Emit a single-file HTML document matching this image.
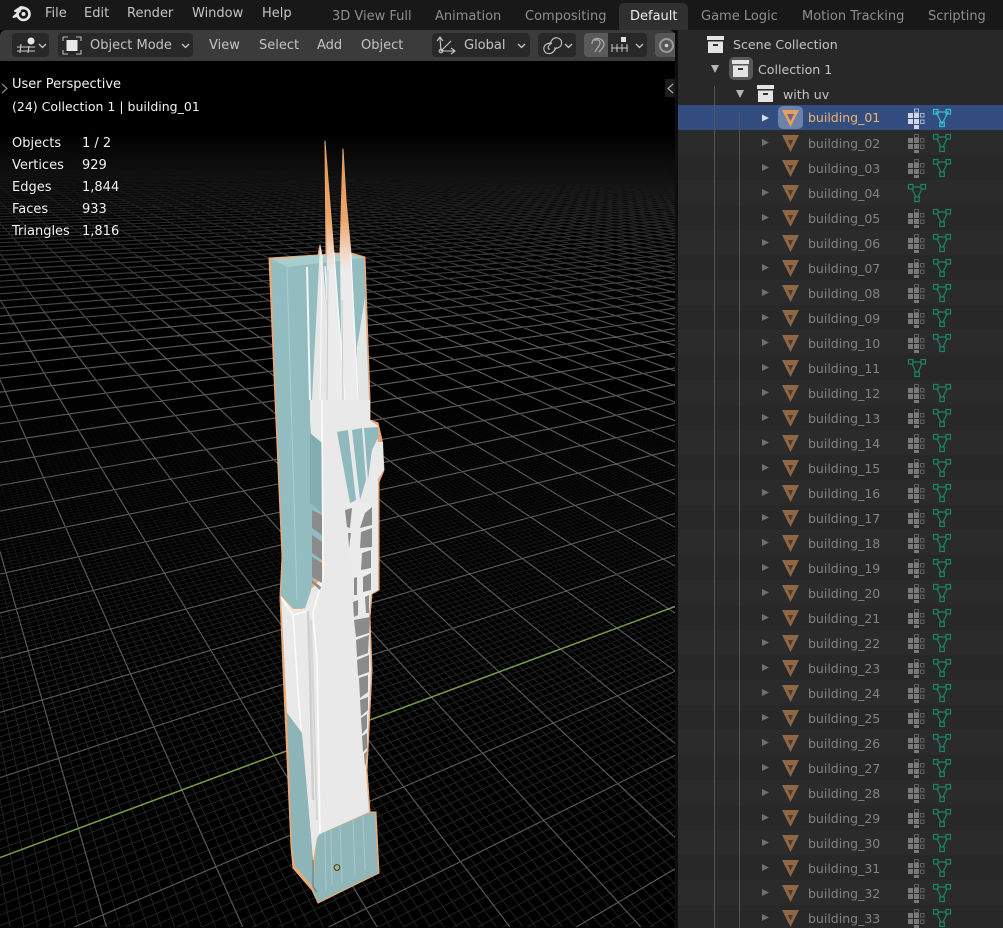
<!DOCTYPE html>
<html><head><meta charset="utf-8">
<style>
html,body{margin:0;padding:0;background:#000;overflow:hidden;width:1003px;height:928px}
#p{position:relative;width:1003px;height:928px;overflow:hidden;background:#000;font-family:"DejaVu Sans","Liberation Sans",sans-serif;font-size:13px;color:#c4c4c4}
.a{position:absolute;white-space:nowrap}
.t{position:absolute;white-space:nowrap;line-height:16px}
.w{color:#8e8e8e}
.o{position:absolute;color:#f2f2f2;white-space:nowrap;line-height:16px;text-shadow:0 0 2px #000}
.btn{position:absolute;background:#282828;border-radius:4px;top:33px;height:24px}
#out{position:absolute;left:678px;top:30px;width:325px;height:898px;background:#282828;overflow:hidden;font-size:12.6px}
#rows{position:absolute;left:0;top:75px;width:325px;height:823px;overflow:hidden}
.r{position:relative;height:25px;color:#838383;font-size:12.5px;overflow:hidden}
.r:nth-child(even){background:#2b2b2b}
.r span{position:absolute;left:130px;top:3px;line-height:22px}
.r svg{position:absolute;left:0;top:0}
.sel{background:#334d80!important}
.sel span{top:2px}
</style></head><body>
<div id="p">
<svg id="g" class="a" style="left:0;top:61px" width="675" height="867" viewBox="0 61 675 867"></svg>
<div class="a" style="left:0;top:61px;width:675px;height:280px;background:linear-gradient(#000 0,#000 72px,rgba(0,0,0,.92) 89px,rgba(0,0,0,.75) 129px,rgba(0,0,0,.5) 179px,rgba(0,0,0,.2) 239px,rgba(0,0,0,0) 280px)"></div>

<svg class="a" style="left:0;top:0" width="675" height="928" viewBox="0 0 675 928">
<defs><filter id="bl"><feGaussianBlur stdDeviation=".35"/></filter>
<linearGradient id="sp" gradientUnits="userSpaceOnUse" x1="0" y1="145" x2="0" y2="270"><stop offset="0" stop-color="#e9924a"/><stop offset=".6" stop-color="#eda56b"/><stop offset=".85" stop-color="#f2d6c0"/><stop offset="1" stop-color="#ececec"/></linearGradient>
</defs>
<g filter="url(#bl)">
<!-- silhouette -->
<path d="M269 258L318 255L320 245L322 255L326 254L325 141L328 180L334 253L340 253L343 149L346 200L351 253L365 257L370 400L370 420L378 423L382 440L384 470L379 482L379 590L372 594L370 617L372 670L367 770L370 812L376 812L379 873L318 903L312 890L293 868L291 847L283 670L280 597L282 557L275 400Z" fill="#e8aa78" stroke="#e8aa78" stroke-width="1" stroke-linejoin="round"/>
<!-- teal tower -->
<path d="M271 259L364 258L369 400L369 420L310 590L303 608L293 608L281 595L283 557L276 400Z" fill="#92bcc0"/>
<path d="M271 259L287 267L364 258L352 254L320 255Z" fill="#a9cccd"/>
<path d="M287 267L291 400L297 600" fill="none" stroke="#a6cfd0" stroke-width="1"/>
<path d="M307 267L310 400" fill="none" stroke="#f2f7f6" stroke-width="2"/>
<path d="M325 266L327 300" fill="none" stroke="#f0f5f5" stroke-width="1.500"/>
<!-- spires -->
<path d="M325 143L328 180L334 252L346 400L325 400L327 252L326 190Z" fill="url(#sp)"/>
<path d="M343 151L346 200L351 252L359 400L342 400L340 252L342 200Z" fill="url(#sp)"/>
<path d="M320 245L322 255L326 300L326 400L312 400Z" fill="#e7e7e7"/>
<path d="M365 297L357 347L357 400L369 400Z" fill="#e4e6e6"/>
<path d="M322 255L320 400M334 252L345 400M351 254L358 400" fill="none" stroke="#fafafa" stroke-width="1"/>
<path d="M328 270L327 400M342 300L343 400" fill="none" stroke="#c6caca" stroke-width="1"/>
<!-- lower tower white base -->
<path d="M310 400L370 400L370 420L378 426L378 590L371 594L369 617L371 670L366 770L369 812L320 834L317 838L313 860L302 733L287 713L281 596L293 609L303 609L310 590L323 577L322 443L310 433Z" fill="#e9e9e9"/>
<path d="M306 400L309 432L309 590L303 608" fill="none" stroke="#92bcc0" stroke-width="4"/>
<path d="M310 433L322 443L322 513L310 503Z" fill="#83aeb1"/>
<path d="M322 400L323 577L313 613L317 660L320 834" fill="none" stroke="#fbfbfb" stroke-width="1.600"/>
<path d="M281 597L293 615L308 611M293 615L298 690L305 780" fill="none" stroke="#fbfbfb" stroke-width="1.600"/>
<path d="M308 611L310 670L313 800" fill="none" stroke="#cfcfcf" stroke-width="2.500"/>
<path d="M311 620L317 820" fill="none" stroke="#d6d6d6" stroke-width="2"/>
<!-- upper right teal -->
<path d="M337 432L348 430L356 500L350 503Z" fill="#8fb9bc"/>
<path d="M352 430L362 428L366 480L360 500Z" fill="#8fb9bc"/>
<path d="M364 428L378 427L378 438L372 450L368 480Z" fill="#8fb9bc"/>
<path d="M378 442L383 442L384 470L378 479L372 470L372 453Z" fill="#e9e9e9"/>
<path d="M345 503L365 503L372 507L372 590L366 600L354 600L350 530Z" fill="#ececec"/>
<!-- grey blocks -->
<g fill="#8b8b8b">
<path d="M312 510L322 515L322 535L312 528Z"/>
<path d="M312 535L322 542L322 560L312 553Z"/>
<path d="M312 557L322 563L322 583L312 577Z"/>
<path d="M312 580L321 587L320 590L312 583Z"/>
<path d="M345 510L352 508L350 528L347 527Z"/>
<path d="M348 533L351 533L349 548Z"/>
<path d="M365 513L372 507L372 525L360 528Z"/>
<path d="M361 532L372 528L372 547L360 548Z"/>
<path d="M362 553L371 550L371 568L361 570Z"/>
<path d="M363 577L371 573L371 590L363 592Z"/>
<path d="M354 578L357 577L357 595L354 595Z"/>
<path d="M353 602L358 600L358 615L354 617Z"/>
<path d="M365 597L369 595L369 613L366 613Z"/>
<path d="M354 620L370 617L369 633L356 637Z"/>
<path d="M356 640L369 635L368 653L357 657Z"/>
<path d="M357 660L369 655L369 672L358 676Z"/>
<path d="M359 678L368 675L368 692L360 698Z"/>
<path d="M360 700L368 697L368 710L361 716Z"/>
<path d="M361 718L367 714L367 728L362 734Z"/>
<path d="M362 736L367 733L367 748L363 752Z"/>
<path d="M364 754L367 751L366 763L365 766Z"/>
</g>
<!-- teal base -->
<path d="M317 838L320 834L369 813L375 813L378 873L318 902L313 890L315 860Z" fill="#8fb7ba"/>
<path d="M287 713L302 733L313 860L313 887L295 866L292 847Z" fill="#8db5b8"/>
<path d="M331 829L332 885M340 826L342 882M353 820L355 876M363 816L365 870M325 832L326 890" fill="none" stroke="#a3c6c7" stroke-width="1.200"/>
<path d="M313 860L313 887L317 892" fill="none" stroke="#6f8e90" stroke-width="1.500"/>
</g>
<circle cx="337" cy="867.500" r="2.800" fill="none" stroke="#2a2a1a" stroke-width="1"/>
<circle cx="337" cy="867.500" r="2" fill="none" stroke="#e0a030" stroke-width=".8"/>
</svg>

<!-- overlay text -->
<div class="o" style="left:12px;top:77px">User Perspective</div>
<div class="o" style="left:12px;top:99px;font-size:12.5px">(24) Collection 1 | building_01</div>
<div class="o" style="left:12px;top:136px">Objects</div><div class="o" style="left:82px;top:136px">1 / 2</div>
<div class="o" style="left:12px;top:158px">Vertices</div><div class="o" style="left:82px;top:158px">929</div>
<div class="o" style="left:12px;top:180px">Edges</div><div class="o" style="left:82px;top:180px">1,844</div>
<div class="o" style="left:12px;top:202px">Faces</div><div class="o" style="left:82px;top:202px">933</div>
<div class="o" style="left:12px;top:224px">Triangles</div><div class="o" style="left:82px;top:224px">1,816</div>
<svg class="a" style="left:0;top:80px" width="10" height="16"><path d="M2 4L7 8.500L2 13" fill="none" stroke="#888" stroke-width="1.200"/></svg>
<div class="a" style="left:665px;top:79px;width:10px;height:18px;background:#1c1c1c"></div>
<svg class="a" style="left:665px;top:80px" width="10" height="16"><path d="M8 4L3 8.500L8 13" fill="none" stroke="#aaa" stroke-width="1.200"/></svg>

<!-- top bar -->
<div class="a" style="left:0;top:0;width:1003px;height:30px;background:#181818"></div>
<div class="a" style="left:619px;top:3px;width:69px;height:27px;background:#303030;border-radius:5px 5px 0 0"></div>
<svg class="a" style="left:12px;top:4px" width="22" height="20" viewBox="0 0 22 20">
<circle cx="11.500" cy="10" r="6" fill="none" stroke="#e6e6e6" stroke-width="2.600"/>
<circle cx="11.500" cy="10" r="2" fill="#e6e6e6"/>
<path d="M1.500 13L8 7L3 7L9 3L12 3.500M1.500 13L5 12" fill="none" stroke="#e6e6e6" stroke-width="2" stroke-linejoin="round" stroke-linecap="round"/>
</svg>
<div class="t" style="left:45px;top:6px">File</div>
<div class="t" style="left:84px;top:6px">Edit</div>
<div class="t" style="left:127px;top:6px">Render</div>
<div class="t" style="left:192px;top:6px">Window</div>
<div class="t" style="left:262px;top:6px">Help</div>
<div class="t w" style="left:332px;top:9px">3D View Full</div>
<div class="t w" style="left:435px;top:9px">Animation</div>
<div class="t w" style="left:525px;top:9px">Compositing</div>
<div class="t" style="left:630px;top:9px;color:#eee">Default</div>
<div class="t w" style="left:701px;top:9px">Game Logic</div>
<div class="t w" style="left:802px;top:9px">Motion Tracking</div>
<div class="t w" style="left:928px;top:9px">Scripting</div>

<!-- header -->
<div class="a" style="left:0;top:30px;width:675px;height:31px;background:#3b3b3b;border-radius:6px 6px 0 0"></div>
<div class="btn" style="left:12px;width:37px"></div>
<div class="btn" style="left:58px;width:135px"></div>
<div class="btn" style="left:432px;width:98px"></div>
<div class="btn" style="left:538px;width:38px"></div>
<div class="btn" style="left:584px;width:63px"></div>
<div class="a" style="left:584px;top:33px;width:24px;height:24px;background:#5a5a5a;border-radius:4px 0 0 4px"></div>
<div class="a" style="left:655px;top:33px;width:20px;height:24px;background:#565656;border-radius:4px 0 0 4px"></div>
<svg class="a" style="left:0;top:30px" width="675" height="31" viewBox="0 30 675 31" fill="none" stroke="#c8c8c8" stroke-width="1.100">
<circle cx="31" cy="41" r="3.500" fill="#e8e8e8" stroke="none"/>
<path d="M17 47H35M17 51H35M21 44L20 53M29 46L28 53"/>
<path d="M39 44L42.500 47.500L46 44M182 44L185.500 47.500L189 44M518 44L521.500 47.500L525 44M565 44L568.500 47.500L572 44M636 44L639.500 47.500L643 44" stroke-width="1.300"/>
<path d="M63 37V41M63 37H68M76 37H81V41M63 50V54H68M81 50V54H76" stroke="#bbb"/>
<rect x="66.500" y="40" width="11" height="11" fill="#e8e8e8" stroke="none"/>
<path d="M440 38L441 51L454 51M441 51L451 41M437 41L440 37L443 41M451 48L455 51L451 54"/>
<circle cx="441" cy="51" r="1.800"/>
<path d="M552 43.500C547 42 543 46 544 50C545 54 551 55 554 51L556.500 47.500M550 49C546 50 549 44 552 43M554 48C559 49 562 46 561.500 42C561 38 555 36 552 40L549.500 44"/>
<path d="M592 44C592 36 603 37 604 44C604 47 601 50 599 52M595 41C595 39 600 39 600 43C600 46 596 49 595 52" stroke="#a8a8a8" stroke-width="1.300"/>
<path d="M612 44V52M617 44V52M622 44V52M627 44V52M612 48H628" stroke-width="1"/>
<rect x="621" y="37" width="5" height="5" fill="#e0e0e0" stroke="none"/>
<circle cx="666.500" cy="45.500" r="6.500" stroke="#999" stroke-width="2"/><circle cx="666.500" cy="45.500" r="1.800" fill="#ccc" stroke="none"/>
</svg>
<div class="t" style="left:90px;top:38px">Object Mode</div>
<div class="t" style="left:209px;top:38px">View</div>
<div class="t" style="left:259px;top:38px">Select</div>
<div class="t" style="left:317px;top:38px">Add</div>
<div class="t" style="left:361px;top:38px">Object</div>
<div class="t" style="left:464px;top:38px">Global</div>

<div class="a" style="left:675px;top:30px;width:3px;height:898px;background:#0e0e0e"></div>

<!-- icons -->
<svg width="0" height="0" style="position:absolute">
<defs>
<g id="box">
<path d="M0 0H17V4H0Z" fill="#e4e4e4"/><path d="M1 5.500H16V17H1Z" fill="#e4e4e4"/><rect x="6" y="8" width="5" height="2" fill="#333"/>
</g>
<g id="arr"><path d="M0 0L7 3.500L0 7Z" fill="#6f6f6f"/></g>
<g id="tri"><path d="M0 0H17L8.500 17Z M6 5L8.500 10.500L11 5Z" fill-rule="evenodd" fill="#8f6745"/><path d="M6 5L8.500 10.500L11 5Z" fill="#4d3c33"/></g>
<g id="mod0">
<g fill="#7a7a7a"><rect x="0" y="4" width="5" height="5"/><rect x="0" y="10" width="5" height="5"/><rect x="6" y="4" width="5" height="5"/><rect x="6" y="10" width="5" height="5"/></g>
<g fill="none" stroke="#666" stroke-width=".9"><rect x="6.500" y="0.500" width="4" height="3"/><rect x="12.500" y="4.500" width="3.500" height="3.500"/><rect x="12.500" y="11" width="3.500" height="3.500"/></g>
</g>
<g id="msh"><g fill="none" stroke="#1c8468" stroke-width="1.200">
<path d="M3 3L9 15L15 3Z"/><rect x="0.500" y="0.500" width="4.500" height="4.500" fill="#2a2a2a"/><rect x="13" y="0.500" width="4.500" height="4.500" fill="#2a2a2a"/><rect x="6.800" y="13" width="4.500" height="4.500" fill="#2a2a2a"/>
</g></g>
<g id="ri"><use href="#arr" x="84" y="9"/><use href="#tri" x="104" y="5"/><use href="#mod0" x="230" y="4"/><rect x="236" y="20" width="5" height="3" fill="#7a7a7a"/><use href="#msh" x="255" y="4"/></g>
<g id="ro"><use href="#arr" x="84" y="9"/><use href="#tri" x="104" y="5"/><use href="#msh" x="230" y="4"/></g>
</defs>
</svg>

<!-- outliner -->
<div id="out">
<svg class="a" style="left:0;top:0;width:325px;height:75px;background:#282828" viewBox="678 30 325 75">
<use href="#box" x="707" y="36"/>
<rect x="729" y="57" width="24" height="23" rx="5" fill="#595959"/>
<use href="#box" x="732" y="60"/>
<use href="#box" x="757" y="85"/>
<path d="M711 65H719L715 73Z M736 90H744L740 98Z" fill="#b4b4b4"/>
</svg>
<div class="t" style="left:55px;top:7px">Scene Collection</div>
<div class="t" style="left:80px;top:32px">Collection 1</div>
<div class="t" style="left:105px;top:57px">with uv</div>
<div id="rows">
<div class="r sel"><svg width="325" height="25" viewBox="678 105 325 25"><rect x="778" y="106" width="25" height="23" rx="5" fill="#6d82a8"/><path d="M762 114.500L769 118L762 121.500Z" fill="#d8dce6"/><path d="M782 110H799L790.500 127Z M787 114L790.500 121L794 114Z" fill-rule="evenodd" fill="#e3a35c"/><path d="M787 114L790.500 121L794 114Z" fill="#7a5f8a"/><g transform="translate(908 109)"><g fill="#d0d6e6"><rect x="0" y="4" width="5" height="5"/><rect x="0" y="10" width="5" height="5"/><rect x="6" y="4" width="5" height="5"/><rect x="6" y="10" width="5" height="5"/><rect x="6" y="16" width="5" height="4"/></g><g fill="none" stroke="#b5bfd8" stroke-width=".9"><rect x="6.500" y="0" width="4" height="3.200"/><rect x="12.500" y="4.500" width="3.500" height="3.500"/><rect x="12.500" y="11" width="3.500" height="3.500"/></g></g><g transform="translate(933 109)" fill="none" stroke="#35c0cf" stroke-width="1.200"><path d="M3 3L9 15L15 3Z"/><rect x=".5" y=".5" width="4.500" height="4.500"/><rect x="13" y=".5" width="4.500" height="4.500"/><rect x="6.800" y="13" width="4.500" height="4.500"/></g></svg><span style="color:#eeb46c">building_01</span></div>
<div class="r"><svg width="325" height="25"><use href="#ri"/></svg><span>building_02</span></div>
<div class="r"><svg width="325" height="25"><use href="#ri"/></svg><span>building_03</span></div>
<div class="r"><svg width="325" height="25"><use href="#ro"/></svg><span>building_04</span></div>
<div class="r"><svg width="325" height="25"><use href="#ri"/></svg><span>building_05</span></div>
<div class="r"><svg width="325" height="25"><use href="#ri"/></svg><span>building_06</span></div>
<div class="r"><svg width="325" height="25"><use href="#ri"/></svg><span>building_07</span></div>
<div class="r"><svg width="325" height="25"><use href="#ri"/></svg><span>building_08</span></div>
<div class="r"><svg width="325" height="25"><use href="#ri"/></svg><span>building_09</span></div>
<div class="r"><svg width="325" height="25"><use href="#ri"/></svg><span>building_10</span></div>
<div class="r"><svg width="325" height="25"><use href="#ro"/></svg><span>building_11</span></div>
<div class="r"><svg width="325" height="25"><use href="#ri"/></svg><span>building_12</span></div>
<div class="r"><svg width="325" height="25"><use href="#ri"/></svg><span>building_13</span></div>
<div class="r"><svg width="325" height="25"><use href="#ri"/></svg><span>building_14</span></div>
<div class="r"><svg width="325" height="25"><use href="#ri"/></svg><span>building_15</span></div>
<div class="r"><svg width="325" height="25"><use href="#ri"/></svg><span>building_16</span></div>
<div class="r"><svg width="325" height="25"><use href="#ri"/></svg><span>building_17</span></div>
<div class="r"><svg width="325" height="25"><use href="#ri"/></svg><span>building_18</span></div>
<div class="r"><svg width="325" height="25"><use href="#ri"/></svg><span>building_19</span></div>
<div class="r"><svg width="325" height="25"><use href="#ri"/></svg><span>building_20</span></div>
<div class="r"><svg width="325" height="25"><use href="#ri"/></svg><span>building_21</span></div>
<div class="r"><svg width="325" height="25"><use href="#ri"/></svg><span>building_22</span></div>
<div class="r"><svg width="325" height="25"><use href="#ri"/></svg><span>building_23</span></div>
<div class="r"><svg width="325" height="25"><use href="#ri"/></svg><span>building_24</span></div>
<div class="r"><svg width="325" height="25"><use href="#ri"/></svg><span>building_25</span></div>
<div class="r"><svg width="325" height="25"><use href="#ri"/></svg><span>building_26</span></div>
<div class="r"><svg width="325" height="25"><use href="#ri"/></svg><span>building_27</span></div>
<div class="r"><svg width="325" height="25"><use href="#ri"/></svg><span>building_28</span></div>
<div class="r"><svg width="325" height="25"><use href="#ri"/></svg><span>building_29</span></div>
<div class="r"><svg width="325" height="25"><use href="#ri"/></svg><span>building_30</span></div>
<div class="r"><svg width="325" height="25"><use href="#ri"/></svg><span>building_31</span></div>
<div class="r"><svg width="325" height="25"><use href="#ri"/></svg><span>building_32</span></div>
<div class="r" style="height:23px"><svg width="325" height="23"><use href="#ri"/></svg><span style="top:6px;line-height:16px">building_33</span></div>
</div>
<div class="a" style="left:36px;top:56px;width:1px;height:842px;background:#555"></div>
<div class="a" style="left:61px;top:82px;width:1px;height:816px;background:#555"></div>
</div>
</div>
<script>
(function(){
var g=0.0575,h=0.0969,x0=182,y0=790,xa=1878,ya=159,xb=-135,yb=75;
var X0=0,X1=675,Y0=61,Y1=927;
function P(u,v){var w=1+g*u+h*v;return [(x0+g*u*xa+h*v*xb)/w,(y0+g*u*ya+h*v*yb)/w];}
function f(n){return n.toFixed(1);}
function seg(a,b){
  var p=P(a[0],a[1]),q=P(b[0],b[1]);
  var dx=q[0]-p[0],dy=q[1]-p[1],t0=0,t1=1;
  var c=[[-dx,p[0]-X0],[dx,X1-p[0]],[-dy,p[1]-Y0],[dy,Y1-p[1]]];
  for(var k=0;k<4;k++){
    var m=c[k][0],n=c[k][1];
    if(m==0){if(n<0)return '';}
    else{var r=n/m; if(m<0){if(r>t0)t0=r;}else{if(r<t1)t1=r;}}
  }
  if(t0>=t1)return '';
  return 'M'+f(p[0]+t0*dx)+' '+f(p[1]+t0*dy)+'L'+f(p[0]+t1*dx)+' '+f(p[1]+t1*dy);
}
var major='',minor='',i,u,v;
for(i=-80;i<=2000;i++){u=i/10;
  if(i%10==0){major+=seg([u,(0.1-1-g*u)/h],[u,500]);}
  else if(u<=20){minor+=seg([u,(0.1-1-g*u)/h],[u,20]);}
}
for(i=-80;i<=2000;i++){v=i/10;
  if(i%10==0){major+=seg([(0.1-1-h*v)/g,v],[500,v]);}
  else if(v<=20){minor+=seg([(0.1-1-h*v)/g,v],[30,v]);}
}
var s='<defs><linearGradient id="mg" gradientUnits="userSpaceOnUse" x1="0" y1="380" x2="0" y2="680"><stop offset="0" stop-color="#000"/><stop offset="1" stop-color="#fff"/></linearGradient><mask id="mk" maskUnits="userSpaceOnUse" x="0" y="61" width="675" height="867"><rect x="0" y="61" width="675" height="867" fill="url(#mg)"/></mask></defs>';
s+='<g mask="url(#mk)"><path d="'+minor+'" fill="none" stroke="#272727" stroke-width=".9"/></g>';
s+='<path d="'+major+'" fill="none" stroke="#585858" stroke-width="1.200"/>';
s+='<path d="M0 857.500L675 606.500" fill="none" stroke="#75984a" stroke-width="1.500"/>';
document.getElementById('g').innerHTML=s;
})();
</script>
</body></html>
